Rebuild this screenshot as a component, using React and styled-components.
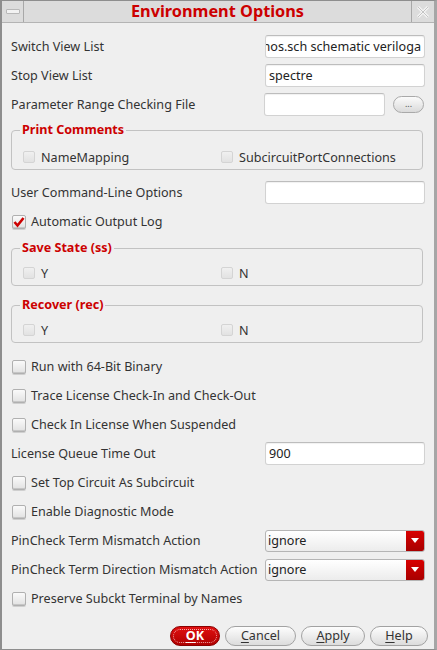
import React from "react";
import styled, { createGlobalStyle } from "styled-components";

const Global = createGlobalStyle`
  html, body { margin: 0; padding: 0; background: #efefef; }
  body { font-family: "Noto Sans", "DejaVu Sans", sans-serif; font-size: 12.6px; color: #333; }
`;

const Window = styled.div`
  box-sizing: border-box;
  width: 437px;
  height: 650px;
  background: #efefef;
  border: 1px solid #8e8e8e;
  border-left-width: 2px;
  border-right: 3px solid #a6a6a6;
  display: flex;
  flex-direction: column;
  overflow: hidden;
`;

const TitleBar = styled.div`
  height: 21px;
  display: flex;
  background: #dcdcdc;
  border-bottom: 1px solid #b4b4b4;
`;

const MinBox = styled.div`
  width: 21px;
  border-right: 1px solid #a8a8a8;
  display: flex;
  align-items: center;
  justify-content: center;
`;

const MinDash = styled.div`
  width: 12px;
  height: 3px;
  background: #f2f2f2;
  border: 1px solid #b8b8b8;
  border-radius: 1px;
`;

const Title = styled.div`
  flex: 1;
  text-align: center;
  font-weight: bold;
  font-size: 16.3px;
  line-height: 21px;
  color: #cc0000;
`;

const CloseBox = styled.div`
  width: 22px;
  border-left: 1px solid #a8a8a8;
  display: flex;
  align-items: center;
  justify-content: center;
`;

const Body = styled.div`
  flex: 1;
  display: flex;
  flex-direction: column;
  padding: 9px 9px 0 9px;
`;

const Row = styled.div`
  height: 29px;
  display: flex;
  align-items: center;
  justify-content: space-between;
  white-space: nowrap;
`;

const Label = styled.span`
  color: #333;
`;

const Field = styled.div`
  box-sizing: border-box;
  width: ${(p) => p.w || 160}px;
  height: 23px;
  background: #fff;
  border: 1px solid #d2d2d2;
  border-top-color: #bdbdbd;
  border-radius: 3px;
  box-shadow: inset 0 1px 1px rgba(0, 0, 0, 0.06);
  display: flex;
  align-items: center;
  justify-content: ${(p) => (p.end ? "flex-end" : "flex-start")};
  padding: 0 3px;
  overflow: hidden;
  white-space: nowrap;
  color: #222;
`;

const FileRow = styled.div`
  display: flex;
  align-items: center;
  gap: 8px;
`;

const DotsButton = styled.div`
  box-sizing: border-box;
  width: 31px;
  height: 17px;
  border-radius: 9px;
  border: 1px solid #a9a9a9;
  background: linear-gradient(#fbfbfb, #dadada);
  font-size: 9px;
  line-height: 13px;
  text-align: center;
  color: #555;
  margin-right: 1px;
`;

const Group = styled.fieldset`
  margin: ${(p) => p.mt}px 2px ${(p) => p.mb}px 0;
  padding: 0 10px 2px 11px;
  border: 1px solid #c2c2c2;
  border-radius: 4px;
`;

const Legend = styled.legend`
  margin-left: -3px;
  padding: 0 2px;
  font-weight: bold;
  color: #cc0000;
  line-height: 16px;
`;

const GroupGrid = styled.div`
  display: grid;
  grid-template-columns: 198px 1fr;
  height: 20px;
  margin-top: ${(p) => p.gap}px;
  align-items: center;
`;

const Check = styled.label`
  display: flex;
  align-items: center;
  gap: ${(p) => (p.faint ? 6 : 5)}px;
  white-space: nowrap;
`;

const Box = styled.span`
  box-sizing: border-box;
  width: ${(p) => (p.faint ? 12 : 14)}px;
  height: ${(p) => (p.faint ? 12 : 14)}px;
  margin-left: ${(p) => (p.faint ? 0 : 1)}px;
  border-radius: 2px;
  border: 1px solid ${(p) => (p.faint ? "#d4d4d4" : "#b0b0b0")};
  background: ${(p) =>
    p.faint ? "linear-gradient(#f0f0f0, #e2e2e2)" : "linear-gradient(#fafafa, #e2e2e2)"};
  box-shadow: ${(p) => (p.faint ? "none" : "inset 0 -1px 0 #c6c6c6, 0 1px 0 #cfcfcf")};
  display: flex;
  align-items: center;
  justify-content: center;
`;

const Select = styled.div`
  box-sizing: border-box;
  width: 160px;
  height: 22px;
  display: flex;
  border: 1px solid #b5b5b5;
  border-radius: 3px;
  background: linear-gradient(#ffffff, #ececec);
  overflow: hidden;
`;

const SelectText = styled.span`
  flex: 1;
  padding-left: 2px;
  line-height: 20px;
  color: #222;
`;

const SelectArrow = styled.span`
  width: 18px;
  background: linear-gradient(#d80000, #a80000);
  display: flex;
  align-items: center;
  justify-content: center;
`;

const Footer = styled.div`
  display: flex;
  justify-content: flex-end;
  gap: 5px;
  margin-top: 13px;
  margin-right: -3px;
`;

const Button = styled.div`
  box-sizing: border-box;
  width: ${(p) => p.w}px;
  height: 20px;
  border-radius: 10px;
  border: 1px solid ${(p) => (p.primary ? "#8a0000" : "#a2a2a2")};
  background: ${(p) =>
    p.primary ? "linear-gradient(#e01010, #b00000)" : "linear-gradient(#fdfdfd, #dcdcdc)"};
  color: ${(p) => (p.primary ? "#fff" : "#333")};
  font-weight: ${(p) => (p.primary ? "bold" : "normal")};
  display: flex;
  align-items: center;
  justify-content: center;
  line-height: 16px;
  outline: ${(p) => (p.primary ? "1px dotted rgba(255, 220, 220, 0.75)" : "none")};
  outline-offset: -4px;
  u { text-decoration-thickness: 1px; text-underline-offset: 2px; }
`;

function CheckBox({ checked, faint, children }) {
  return (
    <Check faint={faint}>
      <Box faint={faint}>
        {checked && (
          <svg width="12" height="12" viewBox="0 0 12 12">
            <path d="M1.5 6 L4.5 9.5 L10.5 2" stroke="#cc0000" strokeWidth="2.6" fill="none" />
          </svg>
        )}
      </Box>
      <Label>{children}</Label>
    </Check>
  );
}

function Dropdown({ value }) {
  return (
    <Select>
      <SelectText>{value}</SelectText>
      <SelectArrow>
        <svg width="8" height="5" viewBox="0 0 8 5">
          <path d="M0 0 H8 L4 5 Z" fill="#fff" />
        </svg>
      </SelectArrow>
    </Select>
  );
}

function OptionGroup({ title, left, right, mt, mb, gap }) {
  return (
    <Group mt={mt} mb={mb}>
      <Legend>{title}</Legend>
      <GroupGrid gap={gap}>
        <CheckBox faint>{left}</CheckBox>
        <CheckBox faint>{right}</CheckBox>
      </GroupGrid>
    </Group>
  );
}

export default function App() {
  return (
    <>
      <Global />
      <Window>
        <TitleBar>
          <MinBox>
            <MinDash />
          </MinBox>
          <Title>Environment Options</Title>
          <CloseBox>
            <svg width="14" height="14" viewBox="0 0 14 14">
              <path d="M2 2 L12 12 M12 2 L2 12" stroke="#f4f4f4" strokeWidth="3" />
              <path d="M2 2 L12 12 M12 2 L2 12" stroke="#c4c4c4" strokeWidth="1" />
            </svg>
          </CloseBox>
        </TitleBar>
        <Body>
          <Row>
            <Label>Switch View List</Label>
            <Field end>nos.sch schematic veriloga</Field>
          </Row>
          <Row>
            <Label>Stop View List</Label>
            <Field>spectre</Field>
          </Row>
          <Row>
            <Label>Parameter Range Checking File</Label>
            <FileRow>
              <Field w={121} />
              <DotsButton>...</DotsButton>
            </FileRow>
          </Row>
          <OptionGroup
            title="Print Comments"
            left="NameMapping"
            right="SubcircuitPortConnections"
            mt={3}
            mb={8}
            gap={9}
          />
          <Row>
            <Label>User Command-Line Options</Label>
            <Field />
          </Row>
          <Row>
            <CheckBox checked>Automatic Output Log</CheckBox>
          </Row>
          <OptionGroup title="Save State (ss)" left="Y" right="N" mt={4} mb={7} gap={7} />
          <OptionGroup title="Recover (rec)" left="Y" right="N" mt={4} mb={9} gap={7} />
          <Row>
            <CheckBox>Run with 64-Bit Binary</CheckBox>
          </Row>
          <Row>
            <CheckBox>Trace License Check-In and Check-Out</CheckBox>
          </Row>
          <Row>
            <CheckBox>Check In License When Suspended</CheckBox>
          </Row>
          <Row>
            <Label>License Queue Time Out</Label>
            <Field>900</Field>
          </Row>
          <Row>
            <CheckBox>Set Top Circuit As Subcircuit</CheckBox>
          </Row>
          <Row>
            <CheckBox>Enable Diagnostic Mode</CheckBox>
          </Row>
          <Row>
            <Label>PinCheck Term Mismatch Action</Label>
            <Dropdown value="ignore" />
          </Row>
          <Row>
            <Label>PinCheck Term Direction Mismatch Action</Label>
            <Dropdown value="ignore" />
          </Row>
          <Row>
            <CheckBox>Preserve Subckt Terminal by Names</CheckBox>
          </Row>
          <Footer>
            <Button primary w={50}>
              <u>O</u>K
            </Button>
            <Button w={71}>
              <u>C</u>ancel
            </Button>
            <Button w={64}>
              <u>A</u>pply
            </Button>
            <Button w={58}>
              <u>H</u>elp
            </Button>
          </Footer>
        </Body>
      </Window>
    </>
  );
}
